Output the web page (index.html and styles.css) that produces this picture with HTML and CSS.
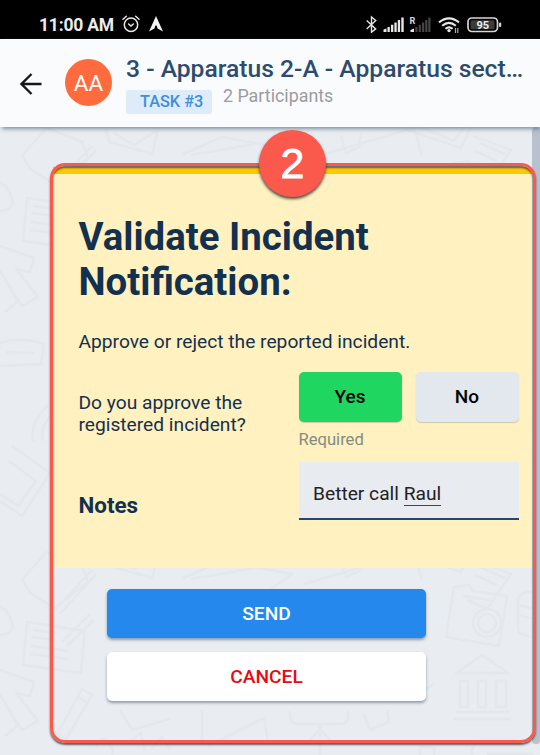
FILE: index.html
```html
<!DOCTYPE html>
<html lang="en">
<head>
<meta charset="utf-8">
<title>Validate Incident Notification</title>
<link rel="stylesheet" href="styles.css">
</head>
<body>
<div class="statusbar">
  <span class="clock">11:00 AM</span>
  <svg class="alarm" width="18" height="18" viewBox="0 0 18 18" fill="none" stroke="#e8e8e8" stroke-width="1.5" stroke-linecap="round"><circle cx="9" cy="9.8" r="6.7"/><path d="M6.6 9l2.4 2 2.3-2M1 4.2L4.3 1.3M17 4.2L13.7 1.3"/></svg>
  <svg class="nav" width="14" height="16" viewBox="0 0 14 16" fill="#f4f4f4"><path d="M7 0L14 15.500 8.600 12.500 7.600 9.500h-1.200L5.400 12.500 0 15.500z"/></svg>
  <span class="spacer"></span>
  <svg width="146" height="18" viewBox="365 15 146 18">
    <path d="M366.700 20.500l9 8.400-4.200 3.300V17l4.200 3.500-9 8.400" fill="none" stroke="#e4e4e4" stroke-width="1.400"/>
    <g fill="#e8e8e8"><path d="M383.500 29.500l3-1V32h-3zM387.500 27h2.300v5h-2.300zM391 24.700h2.300V32H391zM394.400 22.500h2.300V32h-2.300zM397.800 20h2.300v12h-2.300zM401.300 17.500h2.400V32h-2.400z"/><path d="M410.500 30l3.500-1.500V32h-3.500z"/></g>
    <path d="M415.300 27h2.200v5h-2.200zM418.700 24.700h2.200V32h-2.200zM422 22.500h2.200V32H422zM425.200 20h2.200v12h-2.200zM428.300 17.500h2.200V32h-2.200z" fill="#444"/>
    <text class="roam" x="409.500" y="24">R</text>
    <g fill="none" stroke="#e8e8e8" stroke-width="2.100"><path d="M439 22.400q10-8 20 0M442.200 25.700q6.800-5.600 13.600 0M445.400 28.800q3.600-3 7.200 0"/></g>
    <circle cx="449" cy="30.600" r="1.700" fill="#e8e8e8"/>
    <path d="M455.500 28v5M457.800 28v5" stroke="#aaa" stroke-width="1.200"/>
    <rect x="468" y="18" width="29.500" height="13.500" rx="4" fill="none" stroke="#d6d6d6" stroke-width="1.700"/>
    <rect x="470.500" y="20.300" width="24" height="9" rx="1.500" fill="#3b3b3b"/>
    <rect x="499" y="22.500" width="2.200" height="4.500" rx="1" fill="#d6d6d6"/>
    <text class="battery" x="482.800" y="28.900" text-anchor="middle">95</text>
  </svg>
</div>
<header class="header">
  <svg class="back" width="22" height="22" viewBox="0 0 22 22" fill="none" stroke="#15171a" stroke-width="2.300"><path d="M21.500 11H1.700M11.500 1L1.500 11l10 10"/></svg>
  <div class="avatar">AA</div>
  <div class="titles">
    <div class="title">3 - Apparatus 2-A - Apparatus sect…</div>
    <div class="meta"><span class="tag">TASK #3</span><span class="people">2 Participants</span></div>
  </div>
</header>
<main class="content">
  <svg class="doodles" width="540" height="628" viewBox="0 127 540 628" fill="none" stroke="#dfe3e8" stroke-width="2.500" stroke-linejoin="round">
    <defs>
      <g id="sheet">
        <path d="M22 155L47 128 82 142 88 158 54 184 30 169zM55 186L92 146M60 190L96 150M106 129l3 13 43 12 6-24M114 133l20 12 22-14"/>
        <path d="M27 198l58 9-4 42-58-8zM33 206l22 3M32 213l22 3M31 222l38 5M30 230l38 5M62 218L90 190M67 222L94 196"/>
        <path d="M0 182q12 8 13 22-4 7-13 7M0 246l34 12-4 14-14-3 22 28-16 9-22-35M3 275l14 27-12 10"/>
        <path d="M57 310L82 265l10 6-26 44zM76 272l10 6M0 343q20-7 44 1l-3 20-41 2M6 352l29 1M48 405q-20 20-14 37M53 414q-14 13-10 27M12 446l38 27-28 43-22-15M9 461l27 20-18 25-18-12"/>
        <path d="M183 154l39-17 70 13-36 26M191 155l70-12M304 160l110-32 8 28M341 135l5 18 13-6 2-14M407 130l54 18 10-21M420 127l34 14 10-14M473 136l38 14-24 35-20-9M480 143l25 11M475 151l22 10"/>
        <path d="M454 163l15-2 4 6 34 5-8 50-53-9zM463 172l28 4"/><circle cx="487" cy="199" r="14"/><circle cx="487" cy="199" r="9"/>
        <path d="M538 168q-22-2-20 12v25q0 8 22 8M518 180q8 5 22 4M518 190q8 5 22 4"/>
        <path d="M456 249l26-18 26 18zM460 257h8v26h-8zM478 257h8v26h-8zM496 257h10v26h-10zM456 288h53M453 295h58"/>
        <path d="M290 287v5q0 8 8 8h42q8 0 8-8v-5M320 302v30M307 320l13-15 13 15M363 289l7 17 19-8-2-12M365 270l60-3 8-7M120 286l12 20 38-11M202 286v34M208 322l56-28 4 23M472 345v-18q0-8 9-8h60M487 330h45v22"/>
        <path d="M96 323q7-16 15 0 5 7-2 12M128 319l13-10 4 18M151 325l11-12 8 12M365 339q12-12 24 0M420 323h14v13h-14zM105 354l30-20M193 347q20 18 42 0"/>
      </g>
    </defs>
    <use href="#sheet"/><use href="#sheet" y="424"/>
  </svg>
  <section class="card">
    <h1>Validate Incident<br>Notification:</h1>
    <p class="intro">Approve or reject the reported incident.</p>
    <div class="row choice">
      <div class="label">Do you approve the registered incident?</div>
      <div class="field">
        <div class="options"><button class="opt yes">Yes</button><button class="opt no">No</button></div>
        <div class="required">Required</div>
      </div>
    </div>
    <div class="row notes">
      <div class="label strong">Notes</div>
      <div class="field input"><span>Better call <span class="spell">Raul</span></span></div>
    </div>
  </section>
  <div class="actions">
    <button class="action send">SEND</button>
    <button class="action cancel">CANCEL</button>
  </div>
  <div class="scrollbar"></div>
</main>
<div class="frame"></div>
<div class="badge">2</div>
</body>
</html>
```

FILE: styles.css
```css
* { box-sizing: border-box; }
body {
  margin: 0;
  width: 540px;
  height: 755px;
  overflow: hidden;
  position: relative;
  display: flex;
  flex-direction: column;
  background: #e9edf1;
  font-family: Roboto, sans-serif;
  color: #14304f;
}
button { border: 0; padding: 0; font: inherit; }
.statusbar {
  height: 39px;
  flex: none;
  background: #000;
  display: flex;
  align-items: flex-start;
  padding: 15px 29px 0 39px;
}
.clock { color: #ececec; font-size: 17.5px; font-weight: 700; line-height: 20px; letter-spacing: -0.2px; width: 83px; white-space: nowrap; }
.nav { margin: 1px 0 0 9px; }
.spacer { flex: 1; }
.roam { font: 700 9px Roboto, sans-serif; fill: #d8d8d8; }
.battery { font: 700 11px Roboto, sans-serif; fill: #eee; }
.header {
  height: 88px;
  flex: none;
  background: #f9fbfc;
  display: flex;
  padding: 0 0 0 20px;
  position: relative;
  z-index: 1;
  box-shadow: 2px 2px 4px rgba(70, 95, 125, 0.65);
}
.back { margin-top: 34px; }
.avatar {
  width: 47px;
  height: 47px;
  margin: 20px 14px 0 23px;
  border-radius: 50%;
  background: #ff6b3d;
  color: #fff;
  font-size: 22.5px;
  line-height: 48px;
  text-align: center;
}
.titles { padding-top: 15px; white-space: nowrap; }
.title { font-size: 24.650px; font-weight: 500; line-height: 30px; color: #2d4c6d; }
.meta { display: flex; gap: 11px; padding-top: 6px; }
.tag { width: 86px; height: 24px; padding-left: 14px; background: #deebf8; border-radius: 3px; color: #3d8edb; font-size: 16.300px; font-weight: 500; line-height: 24px; }
.people { font-size: 17.850px; color: #9b9da0; line-height: 24px; margin-top: -6px; }
.content { flex: 1; position: relative; padding: 40px 8px 0 53px; }
.doodles { position: absolute; left: 0; top: 0; opacity: 0.4; }
.card {
  position: relative;
  height: 401px;
  padding: 40px 13.500px 0 25.500px;
  background: #fff1c0;
  border-top: 7px solid #ffc800;
}
h1 { margin: 0; font-size: 38.400px; line-height: 45px; font-weight: 700; white-space: nowrap; }
.intro { margin: 27px 0 0; font-size: 19.200px; line-height: 22.500px; white-space: nowrap; }
.row { display: flex; }
.label { width: 220px; flex: none; padding-right: 40px; font-size: 19.200px; line-height: 22.500px; }
.field { width: 220px; }
.choice { margin-top: 18px; height: 90px; }
.choice .label { padding-top: 20px; }
.options { display: flex; gap: 14px; }
.opt { flex: 1; height: 50px; border-radius: 5px; font-size: 19px; font-weight: 500; color: #000; box-shadow: 0 1px 1px rgba(50, 70, 100, 0.25); }
.yes { background: #1ed660; }
.no { background: #e2e8ee; }
.required { margin-top: 8px; font-size: 16.600px; line-height: 20px; color: #858b80; }
.strong { font-weight: 700; padding-top: 32px; font-size: 22.400px; }
.input { height: 58px; background: #e8ebef; border-bottom: 2px solid #26466a; padding: 20px 14.500px 0; font-size: 19.200px; line-height: 23px; color: #222; }
.spell { display: inline-block; border-bottom: 1px solid #444; height: 24px; }
.actions { position: relative; display: flex; flex-direction: column; gap: 14px; width: 319px; margin: 21px 0 0 54px; }
.action { height: 49px; border-radius: 5px; font-size: 19.200px; font-weight: 500; box-shadow: 0 2px 3px rgba(70, 90, 115, 0.55); }
.send { background: #2488ed; color: #fff; }
.cancel { background: #fff; color: #e60a12; }
.scrollbar { position: absolute; right: 0; top: 0; width: 8px; height: 617px; background: #b8c1cd; border-radius: 4px; }
.frame {
  position: absolute;
  z-index: 2;
  left: 50px;
  top: 163px;
  width: 486px;
  height: 580px;
  border: 3px solid #fa594c;
  border-radius: 15px;
  box-shadow: 0 2px 2px rgba(45, 45, 45, 0.75), inset 0 2px 2px rgba(45, 45, 45, 0.7);
}
.badge {
  position: absolute;
  z-index: 3;
  left: 259px;
  top: 130px;
  width: 67px;
  height: 67px;
  border-radius: 50%;
  background: #fa594c;
  color: #fff;
  font: 43px/67px "Liberation Sans", sans-serif;
  -webkit-text-stroke: 0.8px #fff;
  text-align: center;
  box-shadow: 0 2px 3px rgba(45, 45, 45, 0.85);
}
```
